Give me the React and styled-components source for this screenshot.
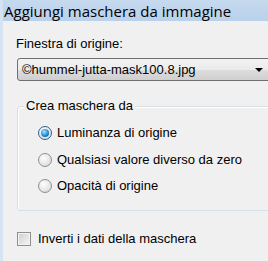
import React from "react";
import styled, { createGlobalStyle } from "styled-components";

const Styles = createGlobalStyle`
  html, body {
    margin: 0;
    background: #f0f0f0;
  }
  body {
    font-family: "Liberation Sans", Arial, sans-serif;
    font-size: 13px;
    color: #000;
  }
`;

const Window = styled.div`
  width: 268px;
  height: 261px;
  overflow: hidden;
  display: flex;
  flex-direction: column;
  background: #f0f0f0;
  border-left: 3px solid #d6e3f2;
  box-sizing: border-box;
`;

const TitleBar = styled.div`
  flex: 0 0 21px;
  margin-left: -3px;
  padding-left: 4px;
  display: flex;
  align-items: center;
  background: linear-gradient(#c6d9ef, #b9d1ea);
  font-family: "Open Sans", "Liberation Sans", sans-serif;
  font-size: 15px;
  white-space: nowrap;
`;

const Body = styled.div`
  padding: 15px 0 0 13px;
  display: flex;
  flex-direction: column;
`;

const Label = styled.div`
  line-height: 16px;
  height: 16px;
`;

const Select = styled.div`
  position: relative;
  flex: 0 0 auto;
  margin: 6px 0 0 1px;
  height: 21px;
  width: 270px;
  border: 1px solid #707070;
  border-radius: 3px;
  background: linear-gradient(#f2f2f2 0%, #ebebeb 50%, #dddddd 51%, #cfcfcf 100%);
  display: flex;
  align-items: center;
  padding-left: 4px;
  white-space: nowrap;
`;

const Arrow = styled.span`
  position: absolute;
  left: 237px;
  top: 9px;
  width: 0;
  height: 0;
  border-left: 4px solid transparent;
  border-right: 4px solid transparent;
  border-top: 4px solid #000;
`;

const Group = styled.div`
  margin: 25px 0 0 1px;
  width: 270px;
  height: 105px;
  border: 1px solid #d5dfe5;
  border-radius: 3px;
  box-shadow: inset 1px 1px 0 #ffffff;
  padding-left: 20px;
  box-sizing: border-box;
  display: flex;
  flex-direction: column;
  gap: 10.5px;
`;

const Legend = styled.div`
  align-self: flex-start;
  margin: -9px 0 0 -14px;
  padding: 0 2px;
  line-height: 16px;
  height: 16px;
  background: #f0f0f0;
`;

const Option = styled.label`
  display: flex;
  align-items: center;
  gap: 5px;
  height: 16px;
  line-height: 16px;
  white-space: nowrap;
  &:first-of-type {
    margin-top: 0.5px;
  }
`;

const Radio = styled.span`
  flex: 0 0 14px;
  width: 14px;
  height: 14px;
  border-radius: 50%;
  border: 1px solid ${({ checked }) => (checked ? "#2c628b" : "#8e8f8f")};
  background: radial-gradient(circle at 40% 35%, #ffffff, #e2e2e2 65%, #c4c4c4);
  box-sizing: border-box;
  display: flex;
  align-items: center;
  justify-content: center;

  &::after {
    content: "";
    display: ${({ checked }) => (checked ? "block" : "none")};
    width: 8px;
    height: 8px;
    border-radius: 50%;
    background: radial-gradient(circle at 40% 35%, #a8e4ff, #1e8ed8 55%, #0a3f78);
  }
`;

const CheckRow = styled.label`
  display: flex;
  align-items: center;
  gap: 7px;
  margin-top: 20px;
  height: 16px;
  line-height: 16px;
  white-space: nowrap;
`;

const Box = styled.span`
  flex: 0 0 14px;
  width: 14px;
  height: 14px;
  margin-left: 1px;
  border: 1px solid #8e8f8f;
  box-sizing: border-box;
  background: linear-gradient(135deg, #cfcfcf, #f6f6f6);
  box-shadow: inset 0 0 0 1px #f4f4f4;
`;

export default function App() {
  return (
    <>
      <Styles />
      <Window>
        <TitleBar>Aggiungi maschera da immagine</TitleBar>
        <Body>
          <Label>Finestra di origine:</Label>
          <Select>
            ©hummel-jutta-mask100.8.jpg
            <Arrow />
          </Select>
          <Group>
            <Legend>Crea maschera da</Legend>
            <Option>
              <Radio checked />
              Luminanza di origine
            </Option>
            <Option>
              <Radio />
              Qualsiasi valore diverso da zero
            </Option>
            <Option>
              <Radio />
              Opacità di origine
            </Option>
          </Group>
          <CheckRow>
            <Box />
            Inverti i dati della maschera
          </CheckRow>
        </Body>
      </Window>
    </>
  );
}
